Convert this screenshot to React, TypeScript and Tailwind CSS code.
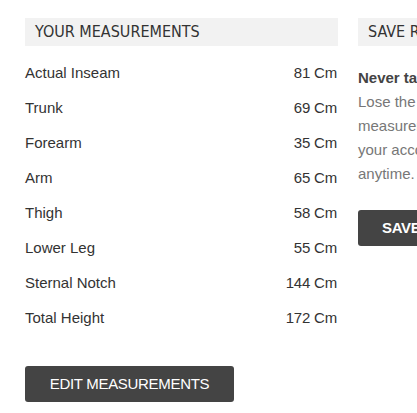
const measurements = [
  { label: "Actual Inseam", value: "81 Cm" },
  { label: "Trunk", value: "69 Cm" },
  { label: "Forearm", value: "35 Cm" },
  { label: "Arm", value: "65 Cm" },
  { label: "Thigh", value: "58 Cm" },
  { label: "Lower Leg", value: "55 Cm" },
  { label: "Sternal Notch", value: "144 Cm" },
  { label: "Total Height", value: "172 Cm" },
];

export default function App() {
  return (
    <div className="h-[413px] w-[417px] overflow-hidden bg-white font-['Liberation_Sans',Arial,sans-serif] text-[#333]">
      <div className="flex pl-[25px] pt-[18px]">
        <section className="w-[313px] shrink-0">
          <h2 className="flex h-[28px] items-center bg-[#f2f2f2] pl-[10px] font-['DejaVu_Sans_Condensed',sans-serif] text-[16px] uppercase">
            Your Measurements
          </h2>
          <ul className="mt-[10px]">
            {measurements.map((m) => (
              <li key={m.label} className="flex h-[35px] items-center justify-between pr-px text-[15px]">
                <span>{m.label}</span>
                <span className="tracking-[-0.2px]">{m.value}</span>
              </li>
            ))}
          </ul>
          <button
            type="button"
            className="mt-[30px] h-[36px] w-[209px] rounded-[3px] bg-[#444] text-[15px] uppercase tracking-[-0.3px] text-white"
          >
            Edit Measurements
          </button>
        </section>

        <section className="ml-[20px] w-[313px] shrink-0">
          <h2 className="flex h-[28px] items-center bg-[#f2f2f2] pl-[10px] font-['DejaVu_Sans_Condensed',sans-serif] text-[16px] uppercase">
            Save Results
          </h2>
          <p className="mt-[20px] text-[15px] font-semibold leading-[24px] text-[#444]">
            Never take your measurements again.
          </p>
          <p className="text-[15px] leading-[24px] text-[#777]">
            Lose the guesswork and keep your
            <br />
            measurements saved safely in
            <br />
            your account so you can use them
            <br />
            anytime.
          </p>
          <button
            type="button"
            className="mt-[24px] h-[36px] whitespace-nowrap rounded-[3px] bg-[#444] px-[24px] text-[15px] font-semibold uppercase tracking-[-0.3px] text-white"
          >
            Save Measurements
          </button>
        </section>
      </div>
    </div>
  );
}
